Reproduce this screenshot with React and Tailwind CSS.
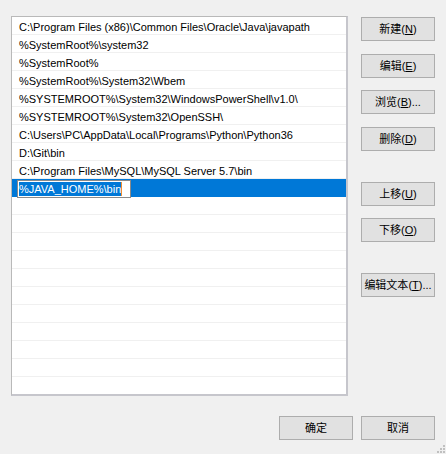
import React from "react";

const rows = [
  "C:\\Program Files (x86)\\Common Files\\Oracle\\Java\\javapath",
  "%SystemRoot%\\system32",
  "%SystemRoot%",
  "%SystemRoot%\\System32\\Wbem",
  "%SYSTEMROOT%\\System32\\WindowsPowerShell\\v1.0\\",
  "%SYSTEMROOT%\\System32\\OpenSSH\\",
  "C:\\Users\\PC\\AppData\\Local\\Programs\\Python\\Python36",
  "D:\\Git\\bin",
  "C:\\Program Files\\MySQL\\MySQL Server 5.7\\bin",
];

function Btn({ label, mn, suffix = "", className = "" }) {
  return (
    <div
      className={`w-[74px] h-[24px] flex items-center justify-center bg-[#e1e1e1] border border-[#adadad] text-[11px] text-black whitespace-nowrap ${className}`}
    >
      <span>
        {label}
        {mn ? (
          <>
            (<span className="underline underline-offset-1">{mn}</span>)
          </>
        ) : null}
        {suffix}
      </span>
    </div>
  );
}

export default function App() {
  const empty = Array.from({ length: 11 });
  return (
    <div
      className="w-[446px] h-[454px] bg-[#f0f0f0] relative overflow-hidden"
      style={{ fontFamily: '"Liberation Sans", "Noto Sans CJK SC", sans-serif' }}
    >
      <div className="flex pt-[16px] pl-[11px]">
        <div className="w-[337px] h-[380px] bg-white border-l border-t border-r-2 border-b-2 border-l-[#b9b9b9] border-t-[#b9b9b9] border-r-[#c6c6cc] border-b-[#c6c6cc] overflow-hidden">
          {rows.map((r, i) => (
            <div
              key={i}
              className="h-[18px] border-b border-[#f0f0f0] pl-[7px] pt-[3px] flex items-center text-[11px] leading-none text-black whitespace-nowrap"
            >
              {r}
            </div>
          ))}
          <div className="h-[18px] bg-[#0078d7] flex items-center pl-[5px] pt-[2px]">
            <div className="h-[18px] w-[114px] shrink-0 bg-white border border-[#8a8a8a] flex items-center pl-[1px]">
              <span className="bg-[#0078d7] text-white text-[11px] leading-[14px] whitespace-nowrap">
                %JAVA_HOME%\bin
              </span>
              <span className="w-[1px] h-[14px] bg-[#f08c30]" />
            </div>
          </div>
          {empty.map((_, i) => (
            <div key={i} className="h-[18px] border-b border-[#f0f0f0]" />
          ))}
        </div>
        <div className="flex flex-col ml-[13px] pt-[1px]">
          <Btn label="新建" mn="N" />
          <Btn label="编辑" mn="E" className="mt-[13px]" />
          <Btn label="浏览" mn="B" suffix="..." className="mt-[12px]" />
          <Btn label="删除" mn="D" className="mt-[13px]" />
          <Btn label="上移" mn="U" className="mt-[31px]" />
          <Btn label="下移" mn="O" className="mt-[12px]" />
          <Btn label="编辑文本" mn="T" suffix="..." className="mt-[31px]" />
        </div>
      </div>
      <div className="flex justify-end gap-[8px] pr-[11px] mt-[20px]">
        <Btn label="确定" />
        <Btn label="取消" />
      </div>
      <svg
        className="absolute right-0 bottom-0"
        width="10"
        height="10"
        viewBox="0 0 10 10"
      >
        <rect x="7" y="1" width="2" height="2" fill="#c0c0c0" />
        <rect x="4" y="4" width="2" height="2" fill="#c0c0c0" />
        <rect x="7" y="4" width="2" height="2" fill="#c0c0c0" />
        <rect x="1" y="7" width="2" height="2" fill="#c0c0c0" />
        <rect x="4" y="7" width="2" height="2" fill="#c0c0c0" />
        <rect x="7" y="7" width="2" height="2" fill="#c0c0c0" />
      </svg>
    </div>
  );
}
